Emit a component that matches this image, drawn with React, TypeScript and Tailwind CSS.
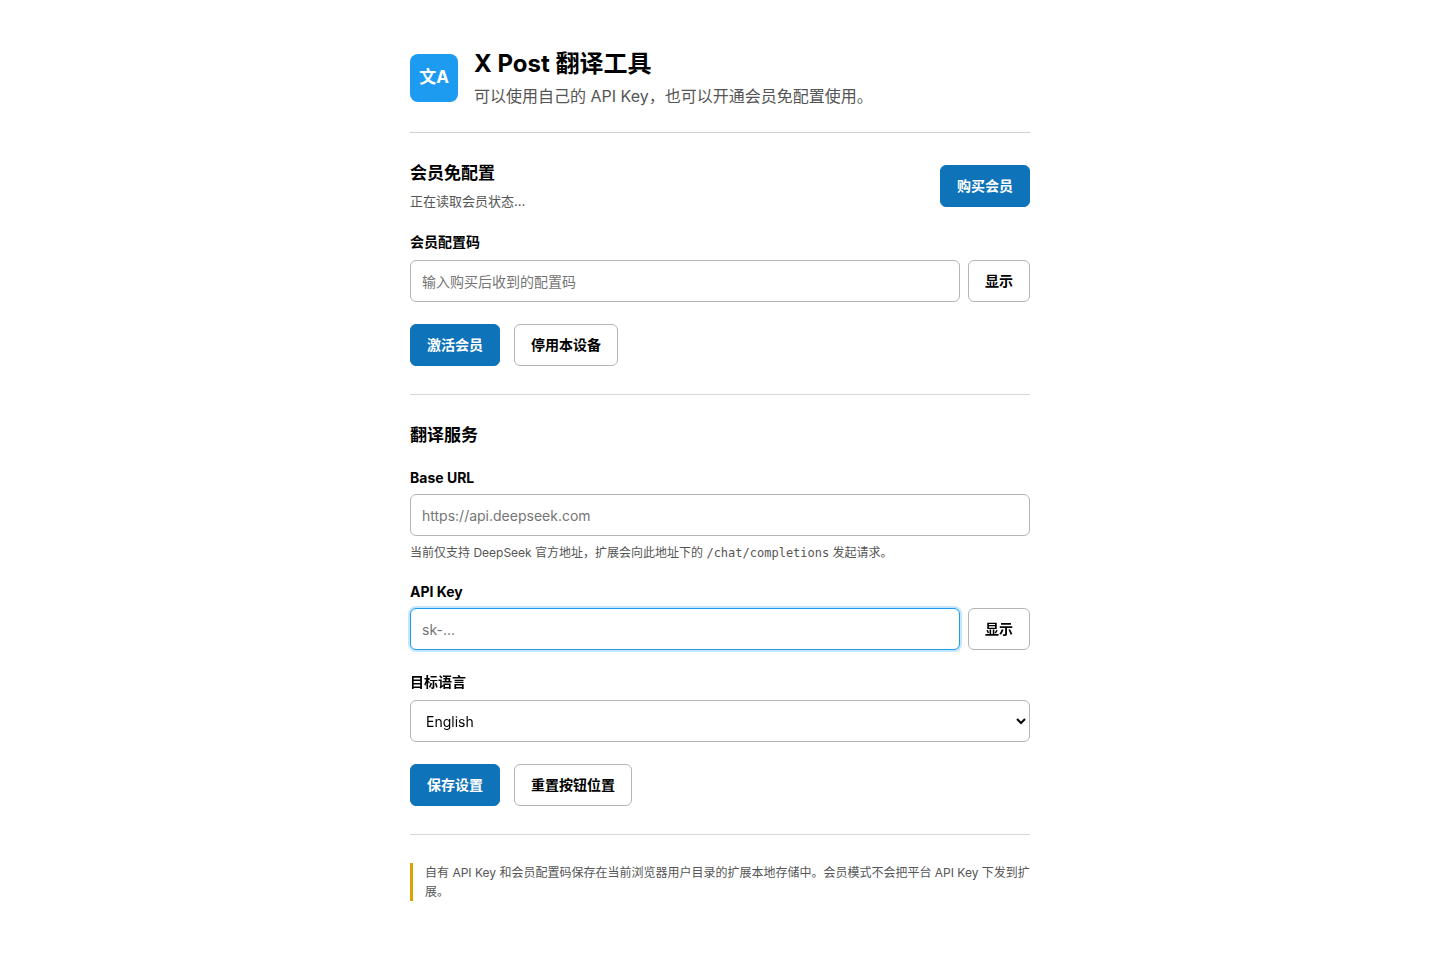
import React from 'react'

const labelClass = 'block text-sm leading-5 font-bold'
const fieldClass =
  'h-[42px] w-full min-w-0 rounded-md border border-[#b4b4b4] bg-white px-[11px] text-sm text-black outline-none placeholder:text-[#757575] focus:border-[#1d9bf0] focus:ring-2 focus:ring-[#1d9bf0]/25'
const buttonClass = 'h-[42px] shrink-0 rounded-md border px-4 text-sm font-bold'
const primaryClass = `${buttonClass} border-[#0f73b9] bg-[#0f73b9] text-white`
const secondaryClass = `${buttonClass} border-[#b4b4b4] bg-white text-black`

const App = () => {
  return (
    <main className="mx-auto max-w-[668px] px-6 py-12 font-[Inter,'Noto_Sans_CJK_SC',sans-serif] text-black">
      <header className="flex items-center gap-4 border-b border-[#d0d0d0] pb-6">
        <div className="flex size-12 shrink-0 items-center justify-center rounded-lg bg-[#1d9bf0] text-[17px] font-bold text-white">
          文A
        </div>
        <div>
          <h1 className="text-2xl leading-8 font-bold">X Post 翻译工具</h1>
          <p className="mt-1 text-base leading-6 text-[#555555]">
            可以使用自己的 API Key，也可以开通会员免配置使用。
          </p>
        </div>
      </header>

      <section className="border-b border-[#d6d6d6] py-7">
        <div className="flex items-center justify-between gap-4">
          <div>
            <h2 className="text-[17px] leading-6 font-bold">会员免配置</h2>
            <p className="mt-1.5 text-[13px] leading-5 text-[#555555]">正在读取会员状态...</p>
          </div>
          <button type="button" className={primaryClass}>购买会员</button>
        </div>
        <label htmlFor="member-code" className={`${labelClass} mt-[21px]`}>会员配置码</label>
        <div className="mt-2 flex gap-2">
          <input id="member-code" type="password" placeholder="输入购买后收到的配置码" className={fieldClass} />
          <button type="button" className={secondaryClass}>显示</button>
        </div>
        <div className="mt-[22px] flex gap-3.5">
          <button type="button" className={primaryClass}>激活会员</button>
          <button type="button" className={secondaryClass}>停用本设备</button>
        </div>
      </section>

      <form className="border-b border-[#d6d6d6] py-7" onSubmit={(e) => e.preventDefault()}>
        <h2 className="text-[17px] leading-6 font-bold">翻译服务</h2>
        <label htmlFor="base-url" className={`${labelClass} mt-[21px]`}>Base URL</label>
        <input id="base-url" type="url" placeholder="https://api.deepseek.com" className={`${fieldClass} mt-1.5`} />
        <p className="mt-2 text-xs leading-[17px] text-[#555555]">
          当前仅支持 DeepSeek 官方地址，扩展会向此地址下的{' '}
          <code className="font-['DejaVu_Sans_Mono',monospace] text-xs">/chat/completions</code> 发起请求。
        </p>
        <label htmlFor="api-key" className={`${labelClass} mt-[21px]`}>API Key</label>
        <div className="mt-1.5 flex gap-2">
          <input id="api-key" type="password" placeholder="sk-..." autoFocus className={fieldClass} />
          <button type="button" className={secondaryClass}>显示</button>
        </div>
        <label htmlFor="language" className={`${labelClass} mt-[22px]`}>目标语言</label>
        <select id="language" className={`${fieldClass} mt-2`} defaultValue="English">
          <option>English</option>
          <option>简体中文</option>
          <option>日本語</option>
        </select>
        <div className="mt-[22px] flex gap-3.5">
          <button type="submit" className={primaryClass}>保存设置</button>
          <button type="button" className={secondaryClass}>重置按钮位置</button>
        </div>
      </form>

      <p className="mt-7 border-l-3 border-[#dfa100] pl-3 text-xs leading-[19px] text-[#555555]">
        自有 API Key 和会员配置码保存在当前浏览器用户目录的扩展本地存储中。会员模式不会把平台 API Key 下发到扩展。
      </p>
    </main>
  )
}

export default App
